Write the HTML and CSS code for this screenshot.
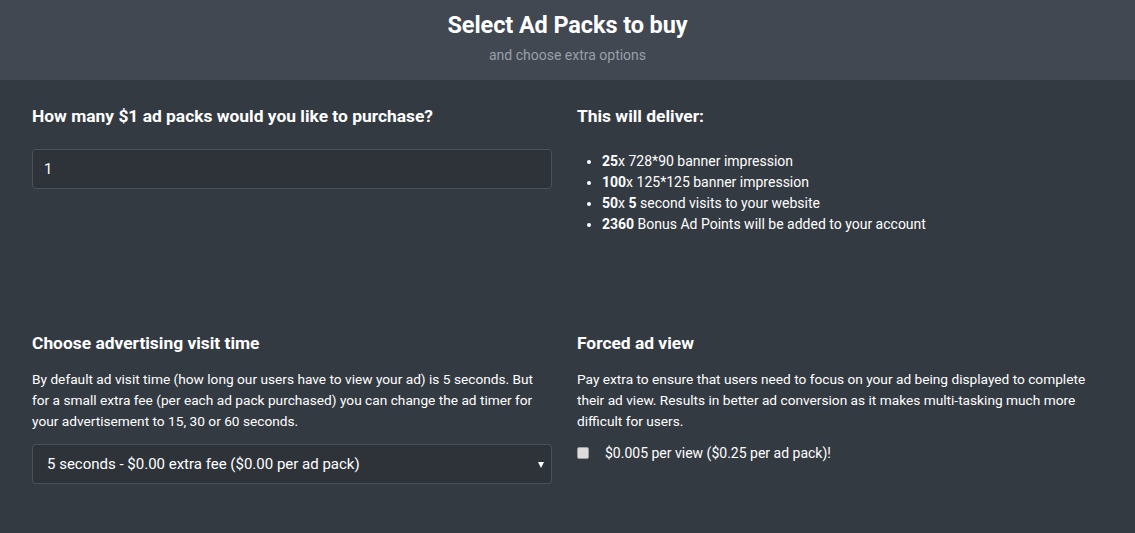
FILE: index.html
```html
<!DOCTYPE html>
<html>
<head>
<meta charset="utf-8">
<link rel="stylesheet" href="styles.css">
</head>
<body>
<header class="hero">
  <h1 class="hero-title">Select Ad Packs to buy</h1>
  <p class="hero-sub">and choose extra options</p>
</header>
<main class="content">
  <section class="col">
    <h2 class="sec-title">How many $1 ad packs would you like to purchase?</h2>
    <input class="field" type="text" value="1">
  </section>
  <section class="col">
    <h2 class="sec-title">This will deliver:</h2>
    <ul class="deliver">
      <li><b>25</b>x 728*90 banner impression</li>
      <li><b>100</b>x 125*125 banner impression</li>
      <li><b>50</b>x <b>5</b> second visits to your website</li>
      <li><b>2360</b> Bonus Ad Points will be added to your account</li>
    </ul>
  </section>
  <section class="col lower">
    <h2 class="sec-title">Choose advertising visit time</h2>
    <p class="desc">By default ad visit time (how long our users have to view your ad) is 5 seconds. But for a small extra fee (per each ad pack purchased) you can change the ad timer for your advertisement to 15, 30 or 60 seconds.</p>
    <div class="select">
      <span>5 seconds - $0.00 extra fee ($0.00 per ad pack)</span>
      <span class="arrow"></span>
    </div>
  </section>
  <section class="col lower">
    <h2 class="sec-title">Forced ad view</h2>
    <p class="desc">Pay extra to ensure that users need to focus on your ad being displayed to complete their ad view. Results in better ad conversion as it makes multi-tasking much more difficult for users.</p>
    <label class="check">
      <span class="box"></span>
      <span>$0.005 per view ($0.25 per ad pack)!</span>
    </label>
  </section>
</main>
</body>
</html>
```

FILE: styles.css
```css
* { box-sizing: border-box; }
html, body {
  margin: 0;
  padding: 0;
  background: #343a42;
  font-family: Roboto, "Liberation Sans", Arial, sans-serif;
  color: #ffffff;
  height: 100%;
}
.hero {
  background: #414852;
  height: 80px;
  text-align: center;
  padding-top: 11px;
}
.hero-title {
  margin: 0;
  font-size: 23.5px;
  font-weight: 700;
  line-height: 28px;
  letter-spacing: -0.1px;
}
.hero-sub {
  margin: 7px 0 0;
  font-size: 14px;
  line-height: 18px;
  color: #9a9fa6;
}
.content {
  display: grid;
  grid-template-columns: 520px 520px;
  column-gap: 25px;
  padding: 0 32px;
}
.col { padding-top: 25px; }
.col.lower { padding-top: 97px; }
.sec-title {
  margin: 0;
  font-size: 17.4px;
  font-weight: 700;
  line-height: 22px;
}
.field {
  display: block;
  margin-top: 22px;
  width: 520px;
  height: 40px;
  background: #2e333a;
  border: 1px solid #4b515a;
  border-radius: 4px;
  color: #ffffff;
  font-family: inherit;
  font-size: 15px;
  padding: 0 11px;
  outline: none;
}
.deliver {
  margin: 24px 0 0;
  padding-left: 25px;
  font-size: 14px;
  line-height: 21px;
}
.deliver b { font-weight: 700; }
.desc {
  margin: 15px 0 0;
  font-size: 13.7px;
  line-height: 21px;
}
.select {
  margin-top: 12px;
  height: 40px;
  border: 1px solid #4b515a;
  border-radius: 4px;
  background: #2e333a;
  display: flex;
  align-items: center;
  justify-content: space-between;
  padding: 0 7px 0 14px;
  font-size: 15px;
}
.arrow {
  width: 0;
  height: 0;
  border-left: 3px solid transparent;
  border-right: 3px solid transparent;
  border-top: 6px solid #ffffff;
  margin-top: 1px;
}
.check {
  margin-top: 12px;
  display: flex;
  align-items: center;
  font-size: 14px;
  line-height: 18px;
}
.box {
  width: 12px;
  height: 12px;
  background: #dcdcdc;
  border: 1px solid #a0a0a0;
  border-radius: 2px;
  margin-right: 16px;
  flex: none;
}
```
